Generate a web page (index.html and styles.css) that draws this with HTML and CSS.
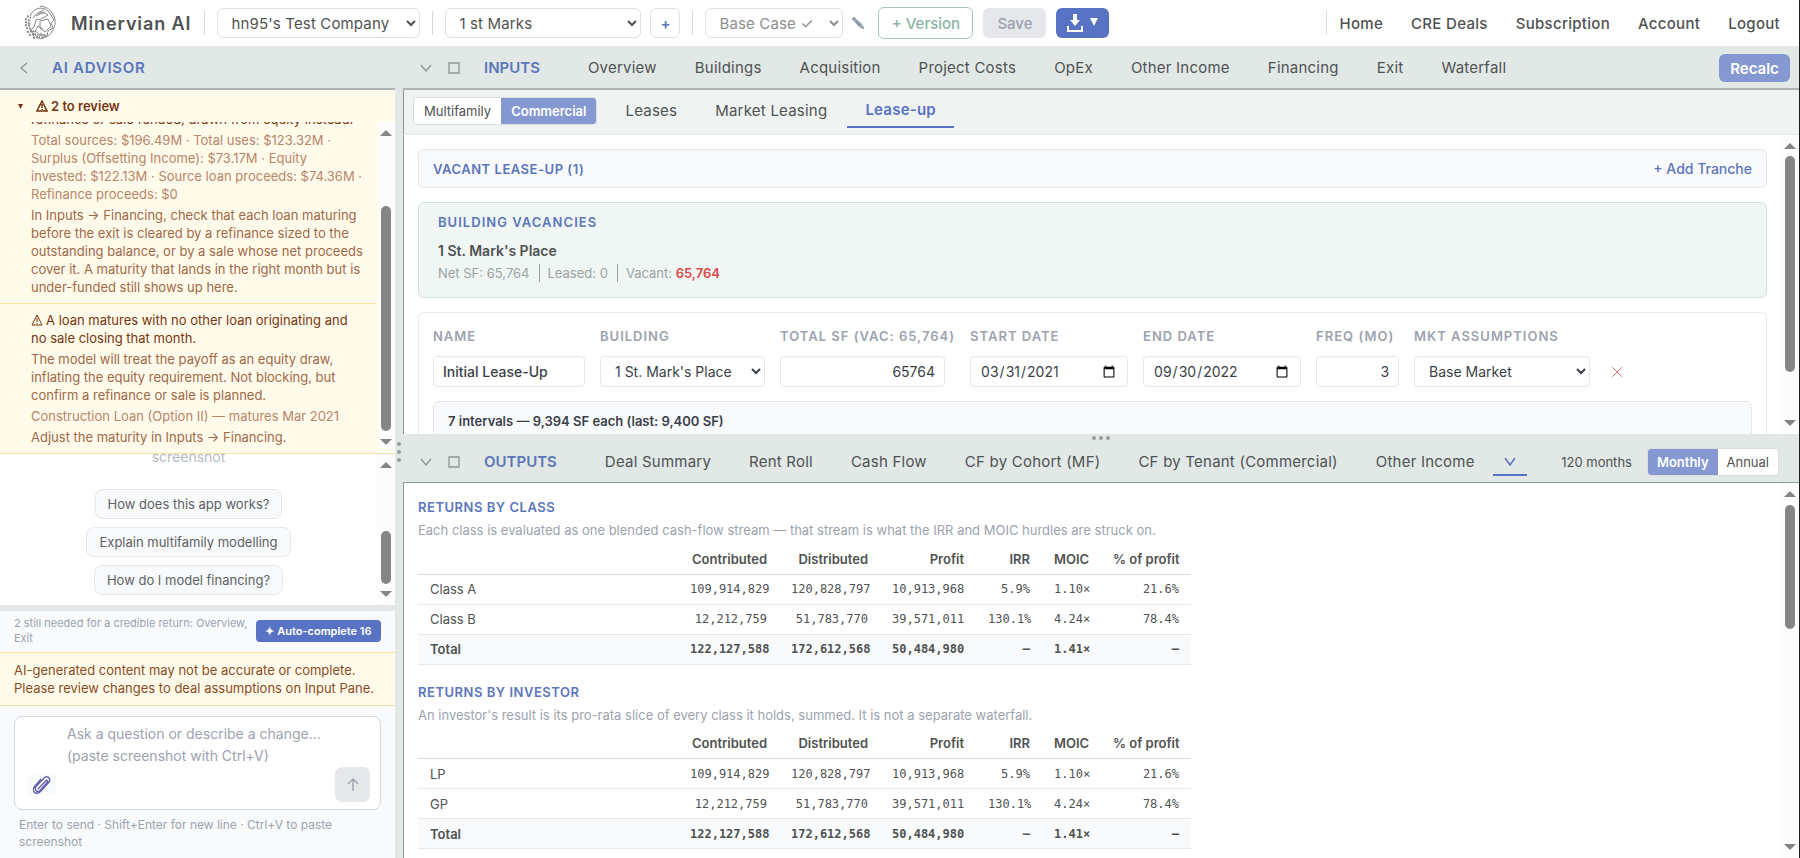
FILE: index.html
```
<!DOCTYPE html>
<html lang="en">
<head>
    <meta charset="UTF-8">
    <meta name="viewport" content="width=device-width, initial-scale=1.0">
    <title>Minervian AI</title>
    <link rel="stylesheet" href="styles.css">
</head>
<body>
    <header class="topbar">
        <svg class="logo" viewBox="0 0 34 38" fill="none" stroke="#8b8b8b" stroke-width="1">
            <path d="M17 2a16 16 0 0 1 13 24q-3 7-13 9" />
            <path d="M7 12q3-7 10-8 6 0 9 4l5 8-3 3 2 5-5 3-1 5-6 2" />
            <path d="M10 14q4-7 12-5l3 2-7 4-5 1-2 7-4 4 5 1 3-6 5 3" />
            <path d="M17 17l8-2 3 7-6 6-5-4z" />
            <path d="M15 9l6-3M13 12l9-4M10 29l7 6M12 27l9 7M8 26l3 7M17 29l7 4M14 31h9" />
            <path d="M4 12l4 2M2 15l6 2M2 18l6 2M2 21l6 1M3 24l6 1M4 28l7-1M6 31l7-1M10 34l7-1" stroke-width="2" stroke-dasharray="2 1" />
        </svg>
        <span class="brand">Minervian AI</span>
        <span class="sep"></span>
        <select class="top-select company" aria-label="Company"><option>hn95's Test Company</option></select>
        <span class="sep"></span>
        <select class="top-select deal" aria-label="Deal"><option>1 st Marks</option></select>
        <button class="btn btn-plus">+</button>
        <span class="sep"></span>
        <select class="top-select version" aria-label="Version"><option>Base Case ✓</option></select>
        <button class="btn-pencil" aria-label="Rename version">
            <svg width="12" height="12" viewBox="0 0 12 12" fill="#8f97a8"><path d="M0 2l2-2 2 2-2 2zM2.500 4.500l2-2 5.500 5-2.500 2.500zM8.200 10.500l2.300-2.300 1.500 3.800z" stroke="#8f97a8" stroke-width=".6" /></svg>
        </button>
        <button class="btn btn-version">+ Version</button>
        <button class="btn btn-save" disabled>Save</button>
        <button class="btn btn-download" aria-label="Download">
            <svg width="32" height="18" viewBox="0 0 32 18" fill="#fff"><path d="M6 0h4v6h3l-5 6-5-6h3zM0 12h2v4h12v-4h2v6H0zM23 4h8l-4 8z" /></svg>
        </button>
        <nav class="top-nav">
            <a href="#">Home</a>
            <a href="#">CRE Deals</a>
            <a href="#">Subscription</a>
            <a href="#">Account</a>
            <a href="#">Logout</a>
        </nav>
    </header>

    <div class="workspace">
        <aside class="advisor">
            <div class="panel-head advisor-head">
                <button class="icon-btn" aria-label="Collapse advisor"><svg width="8" height="12" viewBox="0 0 8 12"><path d="M7 1L1 6l6 5" /></svg></button>
                <h2 class="panel-title">AI ADVISOR</h2>
            </div>

            <section class="review">
                <button class="review-toggle">
                    <svg class="caret" width="5" height="5" viewBox="0 0 6 6"><path d="M0 0h6L3 6z" fill="#78350f" /></svg>
                    <svg class="warn-icon" width="12" height="12" viewBox="0 0 12 12"><path d="M6 1l5 10H1zM6 4v4M6 9v1" stroke-width="1.500" /></svg>
                    2 to review
                </button>
                <div class="scroll-row review-scroll">
                    <div class="review-list">
                        <div class="review-item">
                            <p class="issue">refinance or sale funded, drawn from equity instead.</p>
                            <p class="evidence">Total sources: $196.49M · Total uses: $123.32M · Surplus (Offsetting Income): $73.17M · Equity invested: $122.13M · Source loan proceeds: $74.36M · Refinance proceeds: $0</p>
                            <p class="advice">In Inputs → Financing, check that each loan maturing before the exit is cleared by a refinance sized to the outstanding balance, or by a sale whose net proceeds cover it. A maturity that lands in the right month but is under-funded still shows up here.</p>
                        </div>
                        <div class="review-item">
                            <p class="issue"><svg class="warn-icon" width="12" height="12" viewBox="0 0 12 12"><path d="M6 1l5 10H1zM6 4v4M6 9v1" /></svg>A loan matures with no other loan originating and no sale closing that month.</p>
                            <p class="advice">The model will treat the payoff as an equity draw, inflating the equity requirement. Not blocking, but confirm a refinance or sale is planned.</p>
                            <p class="evidence">Construction Loan (Option II) — matures Mar 2021</p>
                            <p class="advice">Adjust the maturity in Inputs → Financing.</p>
                        </div>
                    </div>
                    <div class="scrollbar"><i class="up"></i><b class="thumb thumb-review"></b><i class="down"></i></div>
                </div>
            </section>

            <section class="scroll-row chat">
                <div class="chat-body">
                    <p class="chat-intro">screenshot</p>
                    <button class="prompt">How does this app works?</button>
                    <button class="prompt">Explain multifamily modelling</button>
                    <button class="prompt">How do I model financing?</button>
                </div>
                <div class="scrollbar"><i class="up"></i><b class="thumb thumb-chat"></b><i class="down"></i></div>
            </section>

            <div class="needed">
                <span>2 still needed for a credible return: Overview, Exit</span>
                <button class="btn-auto">✦ Auto-complete 16</button>
            </div>
            <p class="disclaimer">AI-generated content may not be accurate or complete. Please review changes to deal assumptions on Input Pane.</p>
            <form class="composer">
                <div class="composer-box">
                    <textarea rows="2" aria-label="Message" placeholder="Ask a question or describe a change... (paste screenshot with Ctrl+V)"></textarea>
                    <div class="composer-actions">
                        <button type="button" class="attach" aria-label="Attach file">
                            <svg width="18" height="20" viewBox="0 0 18 20"><path d="M5 14l8-8.500q2-1 1.500 1.500L7 15.500q-2.500 2-4 0-1.500-2 0-4L11 3q3-2.500 5 0 1.500 2 0 4L8 16q-4 4-7 1-2-3 1-6l6-7" /></svg>
                        </button>
                        <button type="button" class="send" aria-label="Send">
                            <svg width="12" height="14" viewBox="0 0 12 14"><path d="M6 13V1M1 6l5-5 5 5" /></svg>
                        </button>
                    </div>
                </div>
                <p class="hint">Enter to send · Shift+Enter for new line · Ctrl+V to paste screenshot</p>
            </form>
        </aside>

        <div class="v-split"><i></i><i></i><i></i></div>

        <main class="main">
            <section class="inputs">
                <div class="panel-head tabs-head">
                    <button class="icon-btn" aria-label="Collapse inputs"><svg width="12" height="8" viewBox="0 0 12 8"><path d="M1 1l5 6 5-6" /></svg></button>
                    <button class="icon-btn" aria-label="Maximize inputs"><svg width="12" height="12" viewBox="0 0 12 12"><path d="M1 1h10v10H1z" /></svg></button>
                    <h2 class="panel-title">INPUTS</h2>
                    <nav class="tabs">
                        <a href="#">Overview</a>
                        <a href="#">Buildings</a>
                        <a href="#">Acquisition</a>
                        <a href="#">Project Costs</a>
                        <a href="#">OpEx</a>
                        <a href="#">Other Income</a>
                        <a href="#">Financing</a>
                        <a href="#">Exit</a>
                        <a href="#">Waterfall</a>
                    </nav>
                    <button class="btn-recalc">Recalc</button>
                </div>
                <div class="subhead">
                    <div class="toggle">
                        <button>Multifamily</button>
                        <button class="on">Commercial</button>
                    </div>
                    <nav class="tabs subtabs">
                        <a href="#">Leases</a>
                        <a href="#">Market Leasing</a>
                        <a href="#" class="active">Lease-up</a>
                    </nav>
                </div>
                <div class="scroll-row inputs-scroll">
                    <div class="inputs-body">
                        <div class="card card-title">
                            <h3>VACANT LEASE-UP (1)</h3>
                            <button class="link-btn">+ Add Tranche</button>
                        </div>
                        <div class="card vacancies">
                            <h3>BUILDING VACANCIES</h3>
                            <p class="building">1 St. Mark's Place</p>
                            <p class="stats"><span>Net SF: 65,764</span><span>Leased: 0</span><span>Vacant: <strong>65,764</strong></span></p>
                        </div>
                        <div class="card tranche">
                            <div class="fields">
                                <div class="field"><label for="name">NAME</label><input id="name" class="f-name" type="text" value="Initial Lease-Up"></div>
                                <div class="field"><label for="building">BUILDING</label><select id="building" class="f-building"><option>1 St. Mark's Place</option></select></div>
                                <div class="field"><label for="sf">TOTAL SF (VAC: 65,764)</label><input id="sf" class="f-sf" type="text" value="65764"></div>
                                <div class="field"><label for="start">START DATE</label><input id="start" class="f-date" type="date" value="2021-03-31"></div>
                                <div class="field"><label for="end">END DATE</label><input id="end" class="f-date" type="date" value="2022-09-30"></div>
                                <div class="field"><label for="freq">FREQ (MO)</label><input id="freq" class="f-freq" type="text" value="3"></div>
                                <div class="field"><label for="mkt">MKT ASSUMPTIONS</label><select id="mkt" class="f-mkt"><option>Base Market</option></select></div>
                                <button class="remove" aria-label="Remove tranche"><svg width="12" height="12" viewBox="0 0 12 12"><path d="M1 1l10 10M11 1L1 11" /></svg></button>
                            </div>
                            <div class="intervals">7 intervals — 9,394 SF each (last: 9,400 SF)</div>
                        </div>
                    </div>
                    <div class="scrollbar"><i class="up"></i><b class="thumb thumb-inputs"></b><i class="down"></i></div>
                </div>
            </section>

            <div class="h-split"><i></i><i></i><i></i></div>

            <section class="outputs">
                <div class="panel-head tabs-head outputs-head">
                    <button class="icon-btn" aria-label="Collapse outputs"><svg width="12" height="8" viewBox="0 0 12 8"><path d="M1 1l5 6 5-6" /></svg></button>
                    <button class="icon-btn" aria-label="Maximize outputs"><svg width="12" height="12" viewBox="0 0 12 12"><path d="M1 1h10v10H1z" /></svg></button>
                    <h2 class="panel-title">OUTPUTS</h2>
                    <nav class="tabs">
                        <a href="#">Deal Summary</a>
                        <a href="#">Rent Roll</a>
                        <a href="#">Cash Flow</a>
                        <a href="#">CF by Cohort (MF)</a>
                        <a href="#">CF by Tenant (Commercial)</a>
                        <a href="#">Other Income</a>
                    </nav>
                    <button class="more" aria-label="More outputs"><svg width="12" height="9" viewBox="0 0 12 9"><path d="M1 1l5 7 5-7" /></svg></button>
                    <span class="months">120 months</span>
                    <div class="toggle period">
                        <button class="on">Monthly</button>
                        <button>Annual</button>
                    </div>
                </div>
                <div class="scroll-row outputs-scroll">
                    <div class="outputs-body">
                        <h3>RETURNS BY CLASS</h3>
                        <p class="note">Each class is evaluated as one blended cash-flow stream — that stream is what the IRR and MOIC hurdles are struck on.</p>
                        <table class="returns">
                            <thead>
                                <tr><th></th><th>Contributed</th><th>Distributed</th><th>Profit</th><th>IRR</th><th>MOIC</th><th>% of profit</th></tr>
                            </thead>
                            <tbody>
                                <tr><td>Class A</td><td>109,914,829</td><td>120,828,797</td><td>10,913,968</td><td>5.9%</td><td>1.10×</td><td>21.6%</td></tr>
                                <tr><td>Class B</td><td>12,212,759</td><td>51,783,770</td><td>39,571,011</td><td>130.1%</td><td>4.24×</td><td>78.4%</td></tr>
                                <tr class="total"><td>Total</td><td>122,127,588</td><td>172,612,568</td><td>50,484,980</td><td>–</td><td>1.41×</td><td>–</td></tr>
                            </tbody>
                        </table>
                        <h3>RETURNS BY INVESTOR</h3>
                        <p class="note">An investor's result is its pro-rata slice of every class it holds, summed. It is not a separate waterfall.</p>
                        <table class="returns">
                            <thead>
                                <tr><th></th><th>Contributed</th><th>Distributed</th><th>Profit</th><th>IRR</th><th>MOIC</th><th>% of profit</th></tr>
                            </thead>
                            <tbody>
                                <tr><td>LP</td><td>109,914,829</td><td>120,828,797</td><td>10,913,968</td><td>5.9%</td><td>1.10×</td><td>21.6%</td></tr>
                                <tr><td>GP</td><td>12,212,759</td><td>51,783,770</td><td>39,571,011</td><td>130.1%</td><td>4.24×</td><td>78.4%</td></tr>
                                <tr class="total"><td>Total</td><td>122,127,588</td><td>172,612,568</td><td>50,484,980</td><td>–</td><td>1.41×</td><td>–</td></tr>
                            </tbody>
                        </table>
                    </div>
                    <div class="scrollbar"><i class="up"></i><b class="thumb thumb-outputs"></b><i class="down"></i></div>
                </div>
            </section>
        </main>
    </div>
</body>
</html>
```

FILE: styles.css
```
* {
    box-sizing: border-box;
}
body {
    margin: 0;
    height: 100vh;
    display: flex;
    flex-direction: column;
    overflow: hidden;
    font-family: Inter, "Liberation Sans", sans-serif;
    font-size: 13px;
    color: #4f5252;
    background: #fff;
    border-right: 1px solid #1c1f22;
}
h2, h3, p {
    margin: 0;
}
a {
    color: inherit;
    text-decoration: none;
}
button, input, select, textarea {
    font: inherit;
    color: inherit;
    margin: 0;
}
button {
    border: 0;
    padding: 0;
    background: none;
    cursor: pointer;
    white-space: nowrap;
}
svg {
    display: block;
}
h3 {
    font-size: 13px;
    line-height: 16px;
    font-weight: 600;
    letter-spacing: 0.04em;
    color: #5b76bb;
}

/* top bar */
.topbar {
    flex: none;
    height: 46px;
    display: flex;
    align-items: center;
    padding: 0 19px 0 23px;
    font-size: 15px;
}
.logo {
    width: 34px;
    height: 38px;
}
.brand {
    margin: 0 13px 0 14px;
    font-size: 18px;
    font-weight: 600;
    letter-spacing: 0.05em;
}
.sep {
    width: 1px;
    height: 24px;
    background: #d8dcdc;
}
.top-select {
    height: 30px;
    border: 1px solid #dcdfe3;
    border-radius: 6px;
    background: #fff;
    padding: 0 0 0 9px;
    letter-spacing: 0.01em;
}
.company {
    width: 203px;
    margin: 0 12px;
}
.deal {
    width: 196px;
    margin: 0 9px 0 12px;
}
.version {
    width: 138px;
    margin: 0 9px 0 12px;
    color: #8b8f8f;
}
.btn {
    height: 30px;
    border-radius: 6px;
    font-weight: 500;
}
.btn-plus {
    width: 30px;
    margin-right: 12px;
    border: 1px solid #dcdfe3;
    color: #5b76bb;
    font-weight: 600;
}
.btn-pencil {
    margin-right: 14px;
}
.btn-version {
    width: 95px;
    height: 32px;
    border: 1px solid #a5c8bb;
    color: #8ab5a4;
    margin-right: 10px;
}
.btn-save {
    width: 63px;
    background: #e5e7eb;
    color: #9ca0ac;
    margin-right: 10px;
}
.btn-download {
    width: 53px;
    background: #5872c4;
    display: flex;
    align-items: center;
    justify-content: center;
}
.top-nav {
    margin-left: auto;
    height: 24px;
    padding-left: 12px;
    border-left: 1px solid #d8dcdc;
    display: flex;
    align-items: center;
    gap: 28px;
    font-weight: 500;
    letter-spacing: 0.02em;
}

.workspace {
    flex: 1;
    min-height: 0;
    display: flex;
}
.panel-head {
    flex: none;
    height: 44px;
    padding-top: 2px;
    display: flex;
    align-items: center;
    background: #e2e8e6;
    border-bottom: 2px solid #adb5b3;
    font-size: 15px;
}
.panel-title {
    font-size: 15px;
    line-height: 20px;
    font-weight: 600;
    color: #5b76bb;
}
.advisor-head .panel-title {
    letter-spacing: 0.05em;
}
.icon-btn svg {
    fill: none;
    stroke: #8d9595;
    stroke-width: 1.3;
}

/* drawn scrollbars */
.scroll-row {
    display: flex;
    min-height: 0;
    overflow: hidden;
}
.scrollbar {
    flex: none;
    width: 18px;
    display: flex;
    flex-direction: column;
    align-items: center;
    background: #fcfcfc;
    padding: 8px 0;
}
.scrollbar .up {
    border: 6px solid transparent;
    border-top-width: 0;
    border-bottom-color: #858585;
}
.scrollbar .down {
    margin-top: auto;
    border: 6px solid transparent;
    border-bottom-width: 0;
    border-top-color: #858585;
}
.thumb {
    width: 10px;
    border-radius: 5px;
    background: #858585;
}
.thumb-review {
    margin-top: 70px;
    height: 225px;
}
.thumb-chat {
    margin-top: 63px;
    height: 53px;
}
.thumb-inputs {
    margin-top: 7px;
    height: 216px;
}
.thumb-outputs {
    margin-top: 8px;
    height: 124px;
}

/* advisor */
.advisor {
    flex: none;
    width: 395px;
    display: flex;
    flex-direction: column;
    min-height: 0;
}
.advisor-head {
    padding-left: 20px;
    gap: 24px;
}
.review {
    flex: none;
    background: #fffbeb;
    border-bottom: 1px solid #f8e3a0;
    color: #78350f;
}
.review-toggle {
    height: 32px;
    padding-left: 18px;
    display: flex;
    align-items: center;
    font-weight: 600;
}
.caret {
    margin-right: 13px;
}
.warn-icon {
    display: inline-block;
    margin-right: 3px;
    vertical-align: -1px;
    fill: none;
    stroke: #78350f;
}
.review-scroll {
    height: 331px;
}
.review-list {
    flex: 1;
    display: flex;
    flex-direction: column;
    justify-content: flex-end;
}
.review-item {
    padding: 7px 12px 7px 31px;
    display: flex;
    flex-direction: column;
    gap: 3px;
    line-height: 18px;
}
.review-item + .review-item {
    border-top: 1px solid #f8e3a0;
}
.issue {
    color: #78350f;
}
.evidence {
    color: #b98468;
}
.advice {
    color: #a16847;
}
.chat {
    flex: 1;
    background: #fff;
}
.chat-body {
    flex: 1;
    display: flex;
    flex-direction: column;
    justify-content: flex-end;
    align-items: center;
    gap: 8px;
    padding-bottom: 10px;
}
.chat-intro {
    flex: none;
    font-size: 14px;
    line-height: 20px;
    margin-bottom: 14px;
    color: #b4bac4;
}
.prompt {
    flex: none;
    height: 30px;
    padding: 0 12px;
    border: 1px solid #e5e7eb;
    border-radius: 8px;
    background: #f9fafb;
    color: #5c6166;
}
.needed {
    flex: none;
    border-top: 6px solid #e2e6e6;
    background: #f8fafc;
    display: flex;
    align-items: center;
    padding: 5px 14px 6px;
    font-size: 11px;
    line-height: 15px;
    color: #9ca3af;
}
.needed span {
    flex: 1;
}
.btn-auto {
    width: 125px;
    height: 22px;
    border-radius: 4px;
    background: #5872c4;
    color: #fff;
    font-weight: 600;
}
.disclaimer {
    flex: none;
    border-top: 1px solid #f8e3a0;
    border-bottom: 1px solid #f0dfa8;
    background: #fffbeb;
    padding: 8px 14px;
    line-height: 18px;
    color: #8a4b22;
}
.composer {
    flex: none;
    background: #f8fafc;
    padding: 10px 14px 8px;
}
.composer-box {
    border: 1px solid #d5d9de;
    border-radius: 8px;
    background: #fff;
    padding: 6px 10px 7px;
}
.composer textarea {
    display: block;
    width: 270px;
    height: 44px;
    margin-left: 42px;
    padding: 0;
    border: 0;
    resize: none;
    overflow: hidden;
    font-size: 14px;
    line-height: 22px;
}
.composer textarea::placeholder {
    color: #9ca3af;
}
.composer-actions {
    display: flex;
    align-items: center;
    justify-content: space-between;
}
.attach {
    padding: 0 5px;
    margin-left: 3px;
    background: #f9fafb;
}
.attach svg {
    fill: none;
    stroke: #6462a8;
    stroke-width: 1.4;
}
.send {
    width: 35px;
    height: 35px;
    border-radius: 7px;
    background: #e5e7eb;
    display: flex;
    align-items: center;
    justify-content: center;
}
.send svg {
    fill: none;
    stroke: #9ca3af;
    stroke-width: 1.4;
}
.hint {
    padding: 6px 5px 0;
    font-size: 12px;
    line-height: 17px;
    color: #9ca3af;
}

/* splitters */
.v-split {
    flex: none;
    width: 8px;
    display: flex;
    flex-direction: column;
    align-items: center;
    justify-content: center;
    gap: 4px;
    background: #e2e8e6;
}
.h-split {
    flex: none;
    height: 8px;
    display: flex;
    align-items: center;
    justify-content: center;
    gap: 3px;
    background: #e2e8e6;
}
.v-split i, .h-split i {
    width: 4px;
    height: 4px;
    border-radius: 50%;
    background: #949c9c;
}

.main {
    flex: 1;
    min-width: 0;
    display: flex;
    flex-direction: column;
}
.inputs {
    flex: none;
    height: 388px;
    display: flex;
    flex-direction: column;
}
.tabs-head {
    padding-left: 17px;
    padding-right: 9px;
}
.tabs-head .icon-btn {
    margin-right: 16px;
}
.tabs-head .panel-title {
    margin: 0 30px 0 8px;
}
.tabs {
    display: flex;
    gap: 2px;
    font-size: 15px;
    letter-spacing: 0.015em;
}
.tabs a {
    padding: 0 18px;
    line-height: 32px;
    white-space: nowrap;
}
.btn-recalc {
    margin-left: auto;
    width: 71px;
    height: 28px;
    border-radius: 6px;
    background: #8598d2;
    color: #fff;
    font-weight: 600;
}
.subhead {
    flex: none;
    height: 45px;
    display: flex;
    align-items: center;
    padding: 0 0 2px 9px;
    background: #eff3f2;
    border-left: 1px solid #8f9898;
    border-bottom: 1px solid #e3e7e7;
}
.toggle {
    display: flex;
    height: 28px;
    border: 1px solid #d9dddf;
    border-radius: 4px;
    background: #fff;
    overflow: hidden;
}
.toggle button {
    padding: 0 10px;
    font-size: 13px;
}
.toggle .on {
    background: #8598d2;
    color: #fff;
    font-weight: 600;
}
.subtabs {
    align-items: center;
    margin-left: 10px;
}
.subtabs .active {
    border-bottom: 2px solid #5872c4;
    color: #5872c4;
    font-weight: 600;
}
.inputs-scroll {
    flex: 1;
    border-left: 1px solid #8f9898;
}
.inputs-body {
    flex: 1;
    display: flex;
    flex-direction: column;
    gap: 14px;
    padding: 14px 14px 0;
    min-width: 0;
}
.card {
    flex: none;
    border: 1px solid #e5e7eb;
    border-radius: 6px;
}
.card-title {
    height: 39px;
    display: flex;
    align-items: center;
    justify-content: space-between;
    padding: 0 14px;
    background: #f9fafc;
}
.link-btn {
    font-size: 14px;
    font-weight: 500;
    color: #5b76bb;
}
.vacancies {
    height: 96px;
    padding: 11px 19px;
    background: #f0f6f4;
    border-color: #cfe2da;
}
.vacancies h3 {
    letter-spacing: 0.08em;
}
.building {
    margin-top: 11px;
    font-size: 14px;
    line-height: 20px;
    font-weight: 600;
}
.stats {
    margin-top: 3px;
    display: flex;
    line-height: 18px;
    color: #9aa3a3;
}
.stats span + span {
    margin-left: 9px;
    padding-left: 8px;
    border-left: 1px solid #9aa3a3;
}
.stats strong {
    font-weight: 600;
    color: #dc4a4a;
}
.tranche {
    padding: 15px 14px;
}
.fields {
    display: flex;
    align-items: flex-end;
    gap: 15px;
}
.field {
    display: flex;
    flex-direction: column;
}
.field label {
    margin-bottom: 12px;
    line-height: 16px;
    font-weight: 600;
    letter-spacing: 1px;
    color: #9ca3af;
}
.field input, .field select {
    height: 31px;
    border: 1px solid #e3e6ea;
    border-radius: 4px;
    background: #fff;
    padding: 0 9px;
    font-size: 14px;
    color: #3b3f46;
}
.field select {
    padding: 0 0 0 10px;
}
.field .f-name {
    width: 152px;
    font-weight: 500;
}
.field .f-building {
    width: 165px;
}
.field .f-sf {
    width: 165px;
    text-align: right;
}
.field .f-date {
    width: 158px;
}
.field .f-freq {
    width: 83px;
    text-align: right;
}
.field .f-mkt {
    width: 176px;
}
.remove {
    height: 31px;
    margin-left: 6px;
}
.remove svg {
    stroke: #dc8078;
}
.intervals {
    margin-top: 14px;
    height: 60px;
    padding: 10px 14px;
    border: 1px solid #e5e7eb;
    border-radius: 6px;
    background: #f9fafb;
    line-height: 18px;
    font-weight: 600;
    color: #3b3f4c;
}

/* outputs */
.outputs {
    flex: 1;
    min-height: 0;
    display: flex;
    flex-direction: column;
}
.outputs-head {
    height: 41px;
    padding-top: 0;
    border-bottom-width: 1px;
    border-color: #8f9898;
}
.more {
    width: 34px;
    height: 28px;
    border-bottom: 2px solid #5872c4;
    display: flex;
    align-items: center;
    justify-content: center;
}
.more svg {
    fill: none;
    stroke: #5872c4;
    stroke-width: 1.5;
}
.months {
    margin-left: auto;
    margin-right: 15px;
    font-size: 13px;
}
.period {
    margin-right: 11px;
}
.period button {
    padding: 0 9px;
}
.outputs-scroll {
    flex: 1;
    border-left: 1px solid #8f9898;
}
.outputs-body {
    flex: 1;
    padding: 16px 14px 0;
}
.note {
    margin-top: 6px;
    line-height: 18px;
    color: #9ca3af;
}
.returns {
    width: 773px;
    margin: 5px 0 19px;
    border-collapse: collapse;
    table-layout: fixed;
}
.returns th, .returns td {
    height: 30px;
    padding: 0 12px;
    border-bottom: 1px solid #e5e7eb;
    text-align: right;
    white-space: nowrap;
}
.returns th {
    font-weight: 600;
    border-bottom-color: #d6d9de;
}
.returns td {
    font-family: "DejaVu Sans Mono", "Liberation Mono", monospace;
    font-size: 12px;
}
.returns td:first-child {
    text-align: left;
    font-family: Inter, "Liberation Sans", sans-serif;
    font-size: 13px;
}
.returns .total td {
    font-weight: 600;
    background: #f9fafb;
}
.returns th:nth-child(2) { width: 101px; }
.returns th:nth-child(3) { width: 101px; }
.returns th:nth-child(4) { width: 96px; }
.returns th:nth-child(5) { width: 66px; }
.returns th:nth-child(6) { width: 59px; }
.returns th:nth-child(7) { width: 90px; }
```
